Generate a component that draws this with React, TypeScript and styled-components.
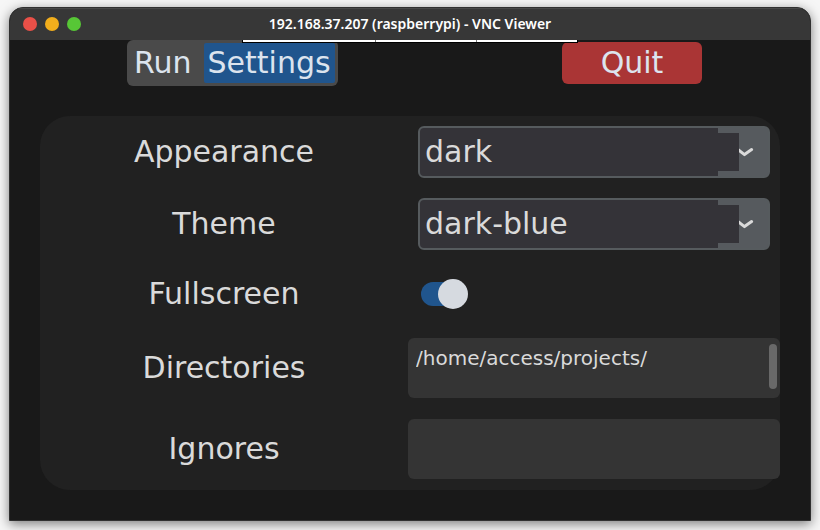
import React, { useState } from "react";
import styled, { createGlobalStyle } from "styled-components";

const GlobalStyle = createGlobalStyle`
  * { box-sizing: border-box; }
  body {
    margin: 0;
    background: #f6f6f6;
    font-family: "DejaVu Sans", sans-serif;
  }
  button, select, textarea { font-family: inherit; }
`;

const Desktop = styled.div`
  display: flex;
  min-height: 100vh;
  padding: 7px 9px 9px;
`;

const Window = styled.main`
  flex: 1;
  display: flex;
  flex-direction: column;
  overflow: hidden;
  border: 1px solid #303030;
  border-radius: 14px 14px 0 0;
  background: #191919;
  box-shadow: 0 3px 12px 0 rgba(0, 0, 0, 0.5);
`;

const TitleBar = styled.header`
  display: grid;
  grid-template-columns: 1fr auto 1fr;
  align-items: center;
  height: 32px;
  padding: 0 13px;
  background: #373737;
  box-shadow: inset 0 1px #484848;
`;

const Lights = styled.div`
  display: flex;
  gap: 8px;
`;

const Light = styled.button<{ $color: string }>`
  width: 14px;
  height: 14px;
  padding: 0;
  border: 0;
  border-radius: 50%;
  background: ${(p) => p.$color};
`;

const Title = styled.h1`
  margin: 0;
  font: 600 14px/20px "Noto Sans", sans-serif;
  color: #ffffff;
`;

const Screen = styled.div`
  position: relative;
  flex: 1;
  padding: 0 30px 30px;
`;

const ViewerToolbar = styled.div`
  position: absolute;
  top: 0;
  left: 50%;
  display: flex;
  width: 336px;
  height: 3px;
  transform: translateX(-50%);
  border: 1px solid #000000;
  border-top: 0;
  background: #ffffff;
`;

const ToolbarPart = styled.span<{ $grow: number }>`
  flex: ${(p) => p.$grow} 0 0;
  & + & { border-left: 1px solid #777777; }
`;

const Actions = styled.div`
  display: flex;
  justify-content: space-between;
  height: 76px;
  padding: 0 78px 0 87px;
`;

const Tabs = styled.div`
  display: flex;
  gap: 8px;
  height: 46px;
  padding: 3px;
  border-radius: 6px;
  background: #4a4a4a;
`;

const Tab = styled.button<{ $active: boolean }>`
  height: 40px;
  padding: 0 4px;
  border: 0;
  border-radius: 2px;
  background: ${(p) => (p.$active ? "#20558d" : "transparent")};
  color: #dce4ee;
  font-size: 30px;
  line-height: 40px;
`;

const QuitButton = styled.button`
  width: 140px;
  height: 42px;
  margin-top: 2px;
  padding: 0;
  border: 0;
  border-radius: 6px;
  background: #aa3535;
  color: #dce4ee;
  font-size: 30px;
  line-height: 40px;
`;

const Panel = styled.form`
  display: grid;
  grid-template-columns: 368fr 372fr;
  grid-template-rows: 72px 72px 68px 80px 82px;
  align-items: center;
  border-radius: 30px;
  background: #212121;
`;

const Label = styled.label`
  justify-self: center;
  color: #dadada;
  font-size: 30px;
  line-height: 40px;
`;

const Combo = styled.div`
  position: relative;
  margin: 0 10px;
`;

const Select = styled.select`
  appearance: none;
  display: block;
  width: 100%;
  height: 52px;
  padding: 0 50px 2px 5px;
  border: 2px solid #565b5e;
  border-radius: 6px;
  background-color: #565a5e;
  background-image: linear-gradient(#343338, #343338), linear-gradient(#343338, #343338);
  background-size: calc(100% - 50px) 100%, calc(100% - 29px) 38px;
  background-position: 0 0, 0 5px;
  background-repeat: no-repeat;
  color: #dadada;
  font-size: 30px;
`;

const Arrow = styled.svg`
  position: absolute;
  top: 20px;
  right: 15px;
  width: 16px;
  height: 12px;
  pointer-events: none;
`;

const Switch = styled.input`
  appearance: none;
  display: flex;
  align-items: center;
  width: 47px;
  height: 30px;
  margin: 0 0 0 13px;

  &::before {
    content: "";
    width: 40px;
    height: 24px;
    border-radius: 12px;
    background: #4a4d50;
  }
  &::after {
    content: "";
    width: 30px;
    height: 30px;
    margin-left: -40px;
    border-radius: 50%;
    background: #d6dae0;
  }
  &:checked::before { background: #20558d; }
  &:checked::after { margin-left: -23px; }
`;

const TextBox = styled.div`
  display: flex;
  height: 60px;
  padding: 6px 3px 6px 8px;
  border-radius: 6px;
  background: #343434;
`;

const TextArea = styled.textarea`
  flex: 1;
  min-width: 0;
  padding: 0;
  border: 0;
  outline: 0;
  resize: none;
  overflow: hidden;
  background: transparent;
  color: #dadada;
  font-size: 20px;
  line-height: 28px;
`;

const ScrollThumb = styled.span`
  width: 8px;
  height: 45px;
  border-radius: 4px;
  background: #696969;
`;

const lights = [
  { name: "Close", color: "#ea5048" },
  { name: "Minimize", color: "#f2ae1c" },
  { name: "Maximize", color: "#57c736" },
];

function ComboBox({ id, initial, options }: { id: string; initial: string; options: string[] }) {
  return (
    <Combo>
      <Select id={id} defaultValue={initial}>
        {options.map((o) => (
          <option key={o}>{o}</option>
        ))}
      </Select>
      <Arrow viewBox="0 0 16 12" aria-hidden="true">
        <path d="M-0.5 4 L5.5 8.6 L12.6 3.6" fill="none" stroke="#dadada" strokeWidth="3" strokeLinecap="round" strokeLinejoin="round" />
      </Arrow>
    </Combo>
  );
}

export default function App() {
  const [tab, setTab] = useState("Settings");
  return (
    <>
      <GlobalStyle />
      <Desktop>
        <Window>
          <TitleBar>
            <Lights>
              {lights.map((l) => (
                <Light key={l.name} type="button" aria-label={l.name} $color={l.color} />
              ))}
            </Lights>
            <Title>192.168.37.207 (raspberrypi) - VNC Viewer</Title>
          </TitleBar>
          <Screen>
            <Actions>
              <Tabs>
                {["Run", "Settings"].map((name) => (
                  <Tab key={name} type="button" $active={tab === name} onClick={() => setTab(name)}>
                    {name}
                  </Tab>
                ))}
              </Tabs>
              <QuitButton type="button">Quit</QuitButton>
            </Actions>
            <ViewerToolbar>
              <ToolbarPart $grow={132} />
              <ToolbarPart $grow={101} />
              <ToolbarPart $grow={100} />
            </ViewerToolbar>
            <Panel>
              <Label htmlFor="appearance">Appearance</Label>
              <ComboBox id="appearance" initial="dark" options={["dark", "light", "system"]} />
              <Label htmlFor="theme">Theme</Label>
              <ComboBox id="theme" initial="dark-blue" options={["dark-blue", "blue", "green"]} />
              <Label htmlFor="fullscreen">Fullscreen</Label>
              <Switch id="fullscreen" type="checkbox" role="switch" defaultChecked />
              <Label htmlFor="directories">Directories</Label>
              <TextBox>
                <TextArea id="directories" spellCheck={false} defaultValue="/home/access/projects/" />
                <ScrollThumb />
              </TextBox>
              <Label htmlFor="ignores">Ignores</Label>
              <TextBox>
                <TextArea id="ignores" spellCheck={false} />
              </TextBox>
            </Panel>
          </Screen>
        </Window>
      </Desktop>
    </>
  );
}
